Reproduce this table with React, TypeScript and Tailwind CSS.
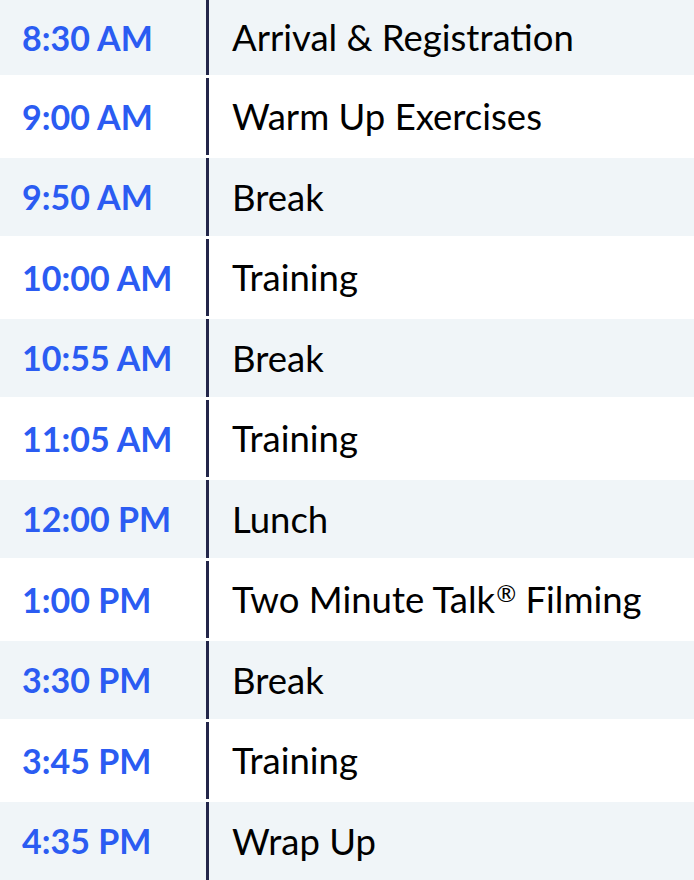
const schedule = [
  { time: '8:30 AM', item: 'Arrival & Registration' },
  { time: '9:00 AM', item: 'Warm Up Exercises' },
  { time: '9:50 AM', item: 'Break' },
  { time: '10:00 AM', item: 'Training' },
  { time: '10:55 AM', item: 'Break' },
  { time: '11:05 AM', item: 'Training' },
  { time: '12:00 PM', item: 'Lunch' },
  { time: '1:00 PM', item: 'Two Minute Talk', mark: true, rest: ' Filming' },
  { time: '3:30 PM', item: 'Break' },
  { time: '3:45 PM', item: 'Training' },
  { time: '4:35 PM', item: 'Wrap Up' },
]

export default function App() {
  return (
    <div className="w-[694px] h-[880px] overflow-hidden bg-white font-['Lato',sans-serif]">
      {schedule.map((row, i) => {
        const striped = i % 2 === 0
        const height = i === 0 ? 'h-[75px]' : striped ? 'h-[78px]' : 'h-[83px]'
        return (
          <div
            key={row.time}
            className={`flex ${height} ${striped ? 'bg-[#f0f5f8]' : 'bg-white py-[3px]'}`}
          >
            <div className="w-[206px] flex items-center pl-[22px]">
              <span className="text-[34px] leading-none font-bold text-[#2b5cf2]">{row.time}</span>
            </div>
            <div className="w-[3px] bg-[#23264a]" />
            <div className="flex-1 flex items-center pl-[23px]">
              <span className="text-[36.5px] leading-none text-black">
                {row.item}
                {row.mark && <sup className="text-[24px] relative -top-[11px] ml-[1px]">®</sup>}
                {row.rest}
              </span>
            </div>
          </div>
        )
      })}
    </div>
  )
}
